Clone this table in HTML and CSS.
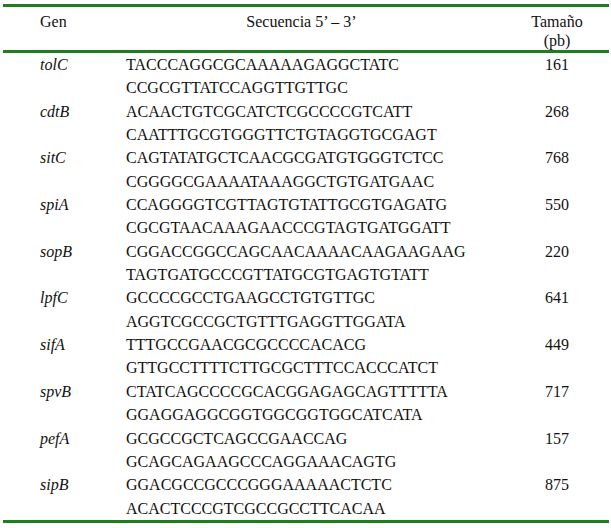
FILE: index.html
```html
<!DOCTYPE html>
<html>
<head>
<meta charset="utf-8">
<link rel="stylesheet" href="styles.css">
</head>
<body>
<table class="tbl">
  <thead>
    <tr>
      <th class="c-gen">Gen</th>
      <th class="c-seq">Secuencia 5’ – 3’</th>
      <th class="c-size">Tamaño<br>(pb)</th>
    </tr>
  </thead>
  <tbody>
    <tr><td class="c-gen">tolC</td><td class="c-seq">TACCCAGGCGCAAAAAGAGGCTATC<br>CCGCGTTATCCAGGTTGTTGC</td><td class="c-size">161</td></tr>
    <tr><td class="c-gen">cdtB</td><td class="c-seq">ACAACTGTCGCATCTCGCCCCGTCATT<br>CAATTTGCGTGGGTTCTGTAGGTGCGAGT</td><td class="c-size">268</td></tr>
    <tr><td class="c-gen">sitC</td><td class="c-seq">CAGTATATGCTCAACGCGATGTGGGTCTCC<br>CGGGGCGAAAATAAAGGCTGTGATGAAC</td><td class="c-size">768</td></tr>
    <tr><td class="c-gen">spiA</td><td class="c-seq">CCAGGGGTCGTTAGTGTATTGCGTGAGATG<br>CGCGTAACAAAGAACCCGTAGTGATGGATT</td><td class="c-size">550</td></tr>
    <tr><td class="c-gen">sopB</td><td class="c-seq">CGGACCGGCCAGCAACAAAACAAGAAGAAG<br>TAGTGATGCCCGTTATGCGTGAGTGTATT</td><td class="c-size">220</td></tr>
    <tr><td class="c-gen">lpfC</td><td class="c-seq">GCCCCGCCTGAAGCCTGTGTTGC<br>AGGTCGCCGCTGTTTGAGGTTGGATA</td><td class="c-size">641</td></tr>
    <tr><td class="c-gen">sifA</td><td class="c-seq">TTTGCCGAACGCGCCCCACACG<br>GTTGCCTTTTCTTGCGCTTTCCACCCATCT</td><td class="c-size">449</td></tr>
    <tr><td class="c-gen">spvB</td><td class="c-seq">CTATCAGCCCCGCACGGAGAGCAGTTTTTA<br>GGAGGAGGCGGTGGCGGTGGCATCATA</td><td class="c-size">717</td></tr>
    <tr><td class="c-gen">pefA</td><td class="c-seq">GCGCCGCTCAGCCGAACCAG<br>GCAGCAGAAGCCCAGGAAACAGTG</td><td class="c-size">157</td></tr>
    <tr><td class="c-gen">sipB</td><td class="c-seq">GGACGCCGCCCGGGAAAAACTCTC<br>ACACTCCCGTCGCCGCCTTCACAA</td><td class="c-size">875</td></tr>
  </tbody>
</table>
</body>
</html>
```
FILE: styles.css
```css
html, body {
  margin: 0;
  padding: 0;
  background: #ffffff;
}
body {
  font-family: "Liberation Serif", serif;
  color: #111111;
  font-size: 16px;
}
.tbl {
  margin: 4px 0 0 3px;
  width: 606px;
  border-collapse: collapse;
  border-spacing: 0;
  border-top: 3px solid #1c7e1c;
  border-bottom: 3px solid #1c7e1c;
  font-family: "Liberation Serif", serif;
  font-size: 16px;
}
.tbl th {
  font-weight: normal;
  line-height: 19px;
  padding: 5px 0 0 0;
  border-bottom: 3px solid #1c7e1c;
  vertical-align: top;
}
.tbl td {
  line-height: 23.35px;
  padding: 0;
  vertical-align: top;
}
.c-gen {
  width: 70px;
  padding-left: 37px !important;
  text-align: left;
}
td.c-gen {
  font-style: italic;
}
.c-seq {
  width: 379px;
  padding-left: 16px !important;
  text-align: left;
}
th.c-seq {
  text-align: center;
  padding-left: 0 !important;
  padding-right: 12px !important;
}
.c-size {
  text-align: center;
}
```
